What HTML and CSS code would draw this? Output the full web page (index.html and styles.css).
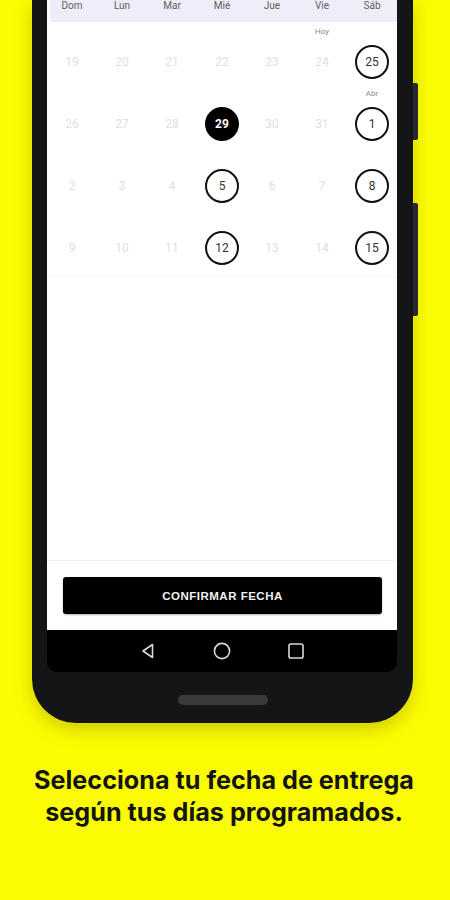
FILE: index.html
```html
<!DOCTYPE html>
<html lang="es">
<head>
<meta charset="utf-8">
<link rel="stylesheet" href="styles.css">
</head>
<body>
<div class="stage">
  <div class="phone">
    <span class="side-btn btn-a"></span>
    <span class="side-btn btn-b"></span>
    <div class="screen">
      <div class="weekdays">
        <span>Dom</span><span>Lun</span><span>Mar</span><span>Mié</span><span>Jue</span><span>Vie</span><span>Sáb</span>
      </div>
      <div class="calendar">
        <div class="week">
          <div class="cell"><span class="tag"></span><span class="day off">19</span></div>
          <div class="cell"><span class="tag"></span><span class="day off">20</span></div>
          <div class="cell"><span class="tag"></span><span class="day off">21</span></div>
          <div class="cell"><span class="tag"></span><span class="day off">22</span></div>
          <div class="cell"><span class="tag"></span><span class="day off">23</span></div>
          <div class="cell"><span class="tag">Hoy</span><span class="day off">24</span></div>
          <div class="cell"><span class="tag"></span><span class="day ring">25</span></div>
        </div>
        <div class="week">
          <div class="cell"><span class="tag"></span><span class="day off">26</span></div>
          <div class="cell"><span class="tag"></span><span class="day off">27</span></div>
          <div class="cell"><span class="tag"></span><span class="day off">28</span></div>
          <div class="cell"><span class="tag"></span><span class="day selected">29</span></div>
          <div class="cell"><span class="tag"></span><span class="day off">30</span></div>
          <div class="cell"><span class="tag"></span><span class="day off">31</span></div>
          <div class="cell"><span class="tag">Abr</span><span class="day ring">1</span></div>
        </div>
        <div class="week">
          <div class="cell"><span class="tag"></span><span class="day off">2</span></div>
          <div class="cell"><span class="tag"></span><span class="day off">3</span></div>
          <div class="cell"><span class="tag"></span><span class="day off">4</span></div>
          <div class="cell"><span class="tag"></span><span class="day ring">5</span></div>
          <div class="cell"><span class="tag"></span><span class="day off">6</span></div>
          <div class="cell"><span class="tag"></span><span class="day off">7</span></div>
          <div class="cell"><span class="tag"></span><span class="day ring">8</span></div>
        </div>
        <div class="week">
          <div class="cell"><span class="tag"></span><span class="day off">9</span></div>
          <div class="cell"><span class="tag"></span><span class="day off">10</span></div>
          <div class="cell"><span class="tag"></span><span class="day off">11</span></div>
          <div class="cell"><span class="tag"></span><span class="day ring">12</span></div>
          <div class="cell"><span class="tag"></span><span class="day off">13</span></div>
          <div class="cell"><span class="tag"></span><span class="day off">14</span></div>
          <div class="cell"><span class="tag"></span><span class="day ring">15</span></div>
        </div>
      </div>
      <div class="spacer"></div>
      <div class="footer">
        <button class="confirm">CONFIRMAR FECHA</button>
      </div>
    </div>
    <div class="navbar">
      <svg class="nav-icon" width="18" height="18" viewBox="0 0 18 18"><path d="M13.5 2.5 L4 9 L13.5 15.5 Z" fill="none" stroke="#d9d9d9" stroke-width="1.6" stroke-linejoin="round"/></svg>
      <svg class="nav-icon" width="18" height="18" viewBox="0 0 18 18"><circle cx="9" cy="9" r="7.6" fill="none" stroke="#d9d9d9" stroke-width="1.6"/></svg>
      <svg class="nav-icon" width="18" height="18" viewBox="0 0 18 18"><rect x="2" y="2" width="14" height="14" rx="1.8" fill="none" stroke="#d9d9d9" stroke-width="1.6"/></svg>
    </div>
    <div class="chin"><span class="pill"></span></div>
  </div>
  <p class="caption">Selecciona tu fecha de entrega<br>según tus días programados.</p>
</div>
</body>
</html>
```

FILE: styles.css
```css
html, body {
  margin: 0;
  padding: 0;
}
body {
  background: #fcfc00;
  width: 450px;
  height: 900px;
  overflow: hidden;
  font-family: Roboto, "Liberation Sans", sans-serif;
}
.stage {
  display: flex;
  flex-direction: column;
  align-items: flex-start;
}
.phone {
  position: relative;
  margin-left: 32px;
  width: 381px;
  height: 723px;
  background: #141516;
  border-radius: 0 0 44px 44px;
  box-shadow: 0 6px 18px rgba(120, 110, 0, 0.35);
  display: flex;
  flex-direction: column;
  align-items: flex-start;
}
.side-btn {
  position: absolute;
  left: 381px;
  width: 5px;
  background: #262733;
  border-radius: 0 2px 2px 0;
}
.btn-a { top: 83px; height: 57px; }
.btn-b { top: 203px; height: 113px; }

.screen {
  margin-left: 15px;
  width: 350px;
  height: 630px;
  background: #fff;
  display: flex;
  flex-direction: column;
}
.weekdays {
  height: 22px;
  background: linear-gradient(to right, #fff 0, #fff 3px, #efedf9 3px);
  display: grid;
  grid-template-columns: repeat(7, 50px);
  align-items: start;
}
.weekdays span {
  text-align: center;
  font-size: 10px;
  line-height: 11px;
  color: #5e5e5e;
}
.calendar {
  padding-top: 2px;
  padding-bottom: 4px;
  border-bottom: 1px solid #f3f3f3;
}
.week {
  display: grid;
  grid-template-columns: repeat(7, 50px);
  height: 62px;
}
.cell {
  display: flex;
  flex-direction: column;
  align-items: center;
}
.tag {
  height: 16px;
  font-size: 8px;
  line-height: 16px;
  color: #8a8a8a;
  margin-bottom: 5px;
}
.day {
  width: 34px;
  height: 34px;
  box-sizing: border-box;
  border-radius: 50%;
  display: flex;
  align-items: center;
  justify-content: center;
  font-size: 12px;
}
.off {
  color: #e0e0e0;
}
.ring {
  border: 2px solid #111;
  color: #333;
  font-weight: 400;
}
.selected {
  background: #000;
  color: #fff;
  font-weight: 700;
}
.spacer {
  flex: 1;
}
.footer {
  border-top: 1px solid #f1f1f1;
  padding: 16px 15px 16px 16px;
}
.confirm {
  display: block;
  width: 100%;
  height: 37px;
  border: 0;
  border-radius: 3px;
  background: #000;
  color: #f2f2f2;
  font-family: "Liberation Sans", Arial, sans-serif;
  font-weight: 700;
  font-size: 11.5px;
  letter-spacing: 0.5px;
  box-shadow: 0 1px 2px rgba(0,0,0,0.3);
}
.navbar {
  margin-left: 15px;
  width: 350px;
  height: 42px;
  background: #000;
  border-radius: 0 0 10px 10px;
  display: flex;
  align-items: center;
  justify-content: center;
  gap: 56px;
}
.chin {
  width: 100%;
  flex: 1;
  display: flex;
  justify-content: center;
  padding-top: 23px;
  box-sizing: border-box;
}
.pill {
  width: 90px;
  height: 10px;
  border-radius: 5px;
  background: #3a3a3c;
}
.caption {
  width: 448px;
  margin: 41px 0 0;
  text-align: center;
  font-family: Inter, Roboto, sans-serif;
  font-weight: 700;
  font-size: 25.2px;
  line-height: 32px;
  color: #141414;
}
```
